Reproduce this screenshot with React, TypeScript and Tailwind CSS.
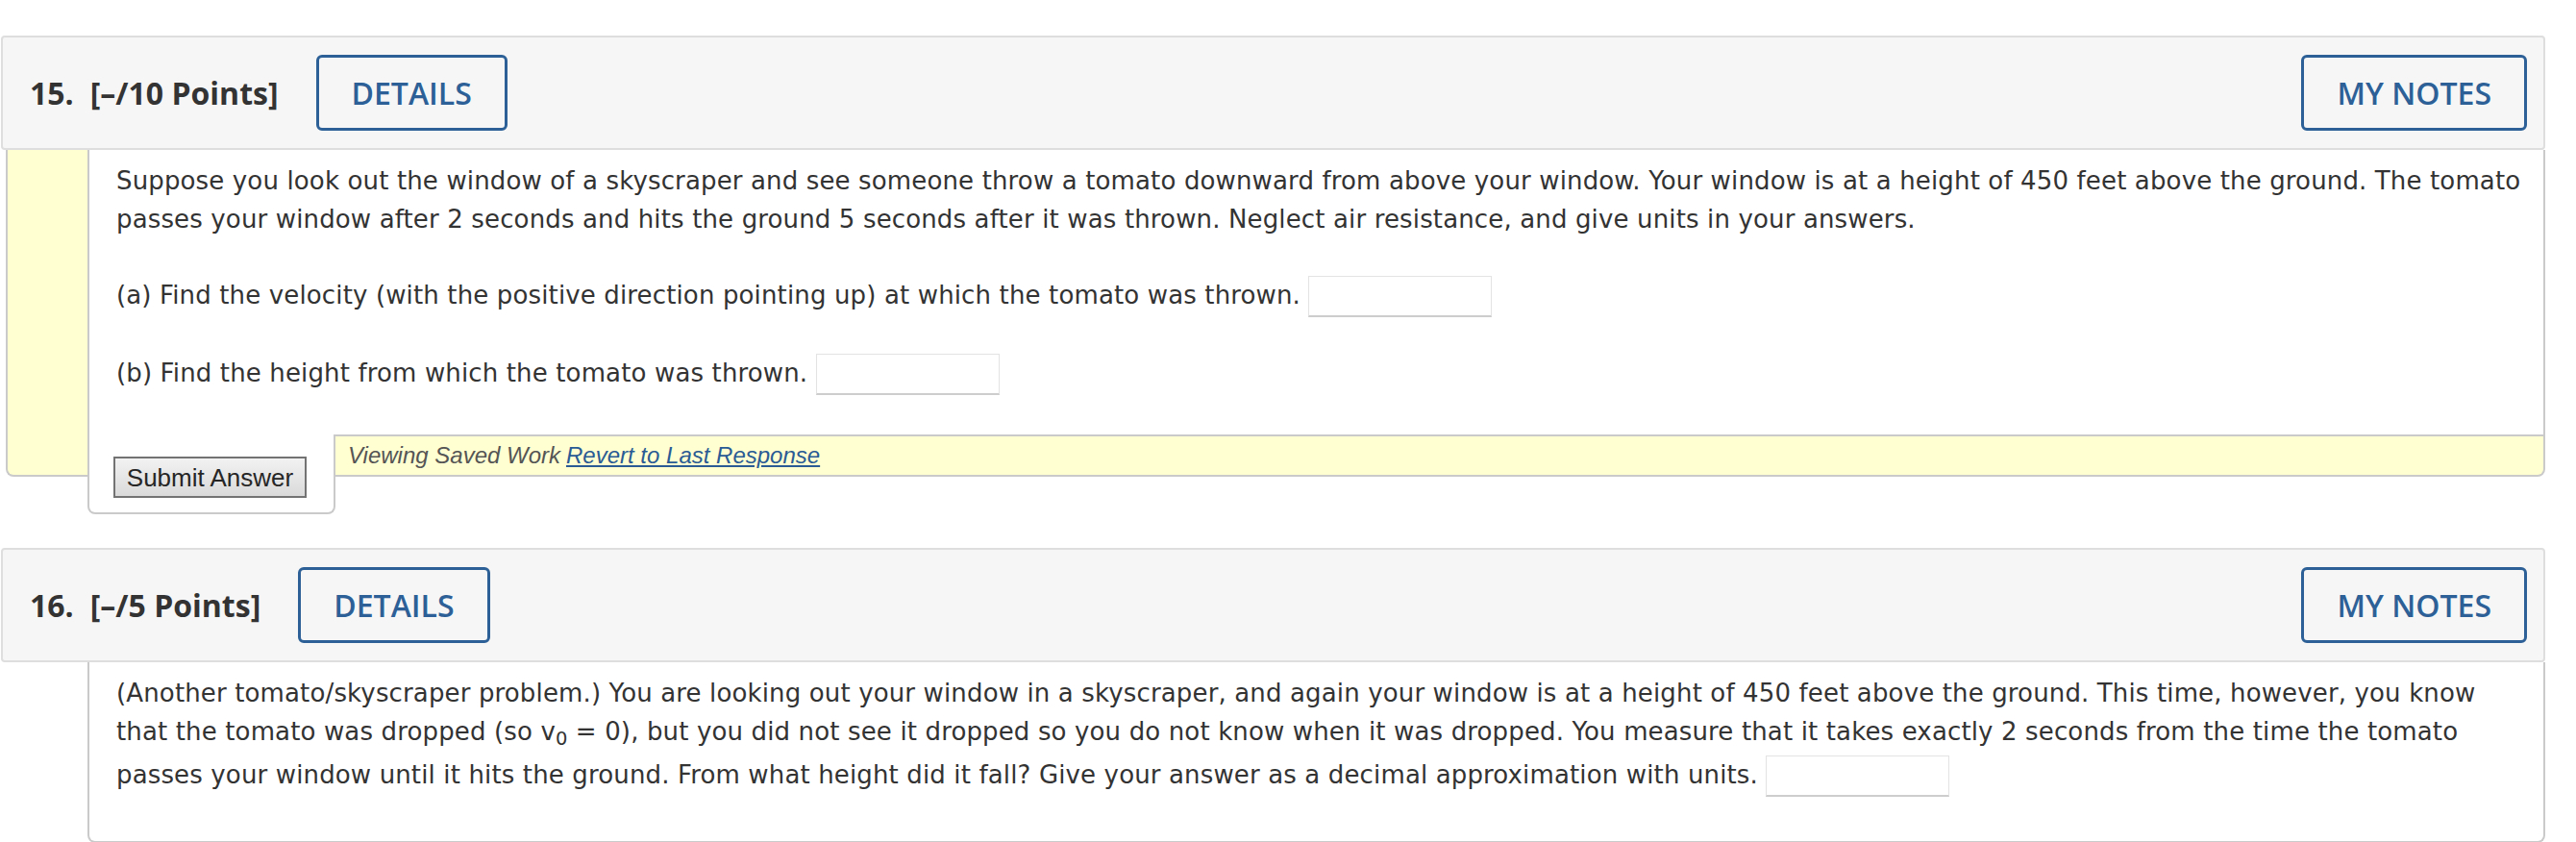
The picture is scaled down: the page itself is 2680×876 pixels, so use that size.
import React from 'react';

// ============================================
// SHARED STYLES
// ============================================
const bodyText =
  "font-['DejaVu_Sans',Verdana,sans-serif] text-[26px] leading-[40px] tracking-[0.14px] text-[#333]";
const outlineButton =
  "h-[79px] px-[34px] border-[3px] border-[#2c6096] rounded-[6px] bg-transparent text-[#2c6096] text-[32px] font-semibold leading-none";

const AnswerBox: React.FC<{ className?: string }> = ({ className = '' }) => (
  <input
    type="text"
    className={`inline-block align-middle w-[191px] h-[43px] border border-[#e3e3e3] border-b-2 border-b-[#cdcdcd] bg-white outline-none ${className}`}
  />
);

// ============================================
// QUESTION HEADER
// ============================================
interface HeaderProps {
  num: number;
  points: number;
}

const QuestionHeader: React.FC<HeaderProps> = ({ num, points }) => (
  <div className="flex items-center h-[119px] pl-[28px] pr-[17px] bg-[#f6f6f6] border-2 border-[#dedede] rounded-[4px] font-['Open_Sans',sans-serif]">
    <span className="text-[32px] font-bold text-[#333]">{num}.</span>
    <span className="ml-[17px] text-[32px] font-bold text-[#333]">[–/{points} Points]</span>
    <button className={`ml-[39px] ${outlineButton}`}>DETAILS</button>
    <button className={`ml-auto ${outlineButton}`}>MY NOTES</button>
  </div>
);

// ============================================
// APP
// ============================================
export default function App() {
  return (
    <div className="w-[2680px] min-h-[876px] bg-white pl-[1px] pr-[32px] pt-[37px]">
      {/* Question 15 */}
      <section>
        <QuestionHeader num={15} points={10} />
        <div className="ml-[5px] flex">
          <div className="w-[85px] mb-[39px] bg-[#ffffd1] border-l-2 border-b-2 border-[#cacaca] rounded-bl-[8px]" />
          <div className="flex-1 flex flex-col">
            <div className={`bg-white border-l-2 border-r-2 border-[#cacaca] pl-[28px] pr-[6px] pt-[12px] pb-[41px] whitespace-nowrap ${bodyText}`}>
              <p>
                Suppose you look out the window of a skyscraper and see someone throw a tomato downward from above
                your window. Your window is at a height of 450 feet above the ground. The tomato
                <br />
                passes your window after 2 seconds and hits the ground 5 seconds after it was thrown. Neglect air
                resistance, and give units in your answers.
              </p>
              <p className="mt-[39px]">
                (a) Find the velocity (with the positive direction pointing up) at which the tomato was thrown.{' '}
                <AnswerBox />
              </p>
              <p className="mt-[38px]">
                (b) Find the height from which the tomato was thrown. <AnswerBox />
              </p>
            </div>
            <div className="flex items-start">
              <div className="w-[258px] h-[83px] bg-white border-l-2 border-r-2 border-b-2 border-[#cacaca] rounded-b-[8px] pl-[25px] pt-[23px]">
                <button className="w-[201px] h-[43px] border-2 border-[#737373] bg-gradient-to-b from-[#f2f2f2] to-[#dadada] font-['Liberation_Sans',Arial,sans-serif] text-[26px] text-[#262626] leading-none">
                  Submit Answer
                </button>
              </div>
              <div className="flex-1 h-[44px] flex items-center pl-[13px] bg-[#ffffd1] border-t-2 border-b-2 border-r-2 border-[#cacaca] rounded-br-[8px] font-['Liberation_Sans',Arial,sans-serif] text-[24px] italic text-[#555]">
                <span>Viewing Saved Work</span>
                <a href="#" className="ml-[6px] text-[#2a5b94] underline">
                  Revert to Last Response
                </a>
              </div>
            </div>
          </div>
        </div>
      </section>

      {/* Question 16 */}
      <section className="mt-[35px]">
        <QuestionHeader num={16} points={5} />
        <div className={`ml-[90px] bg-white border-l-2 border-r-2 border-b-2 border-[#cacaca] rounded-b-[8px] pl-[28px] pr-[6px] pt-[12px] pb-[41px] whitespace-nowrap ${bodyText}`}>
          <p>
            (Another tomato/skyscraper problem.) You are looking out your window in a skyscraper, and again your
            window is at a height of 450 feet above the ground. This time, however, you know
            <br />
            that the tomato was dropped (so v<sub>0</sub> = 0), but you did not see it dropped so you do not know when
            it was dropped. You measure that it takes exactly 2 seconds from the time the tomato
            <br />
            passes your window until it hits the ground. From what height did it fall? Give your answer as a decimal
            approximation with units. <AnswerBox className="my-[5px]" />
          </p>
        </div>
      </section>
    </div>
  );
}
